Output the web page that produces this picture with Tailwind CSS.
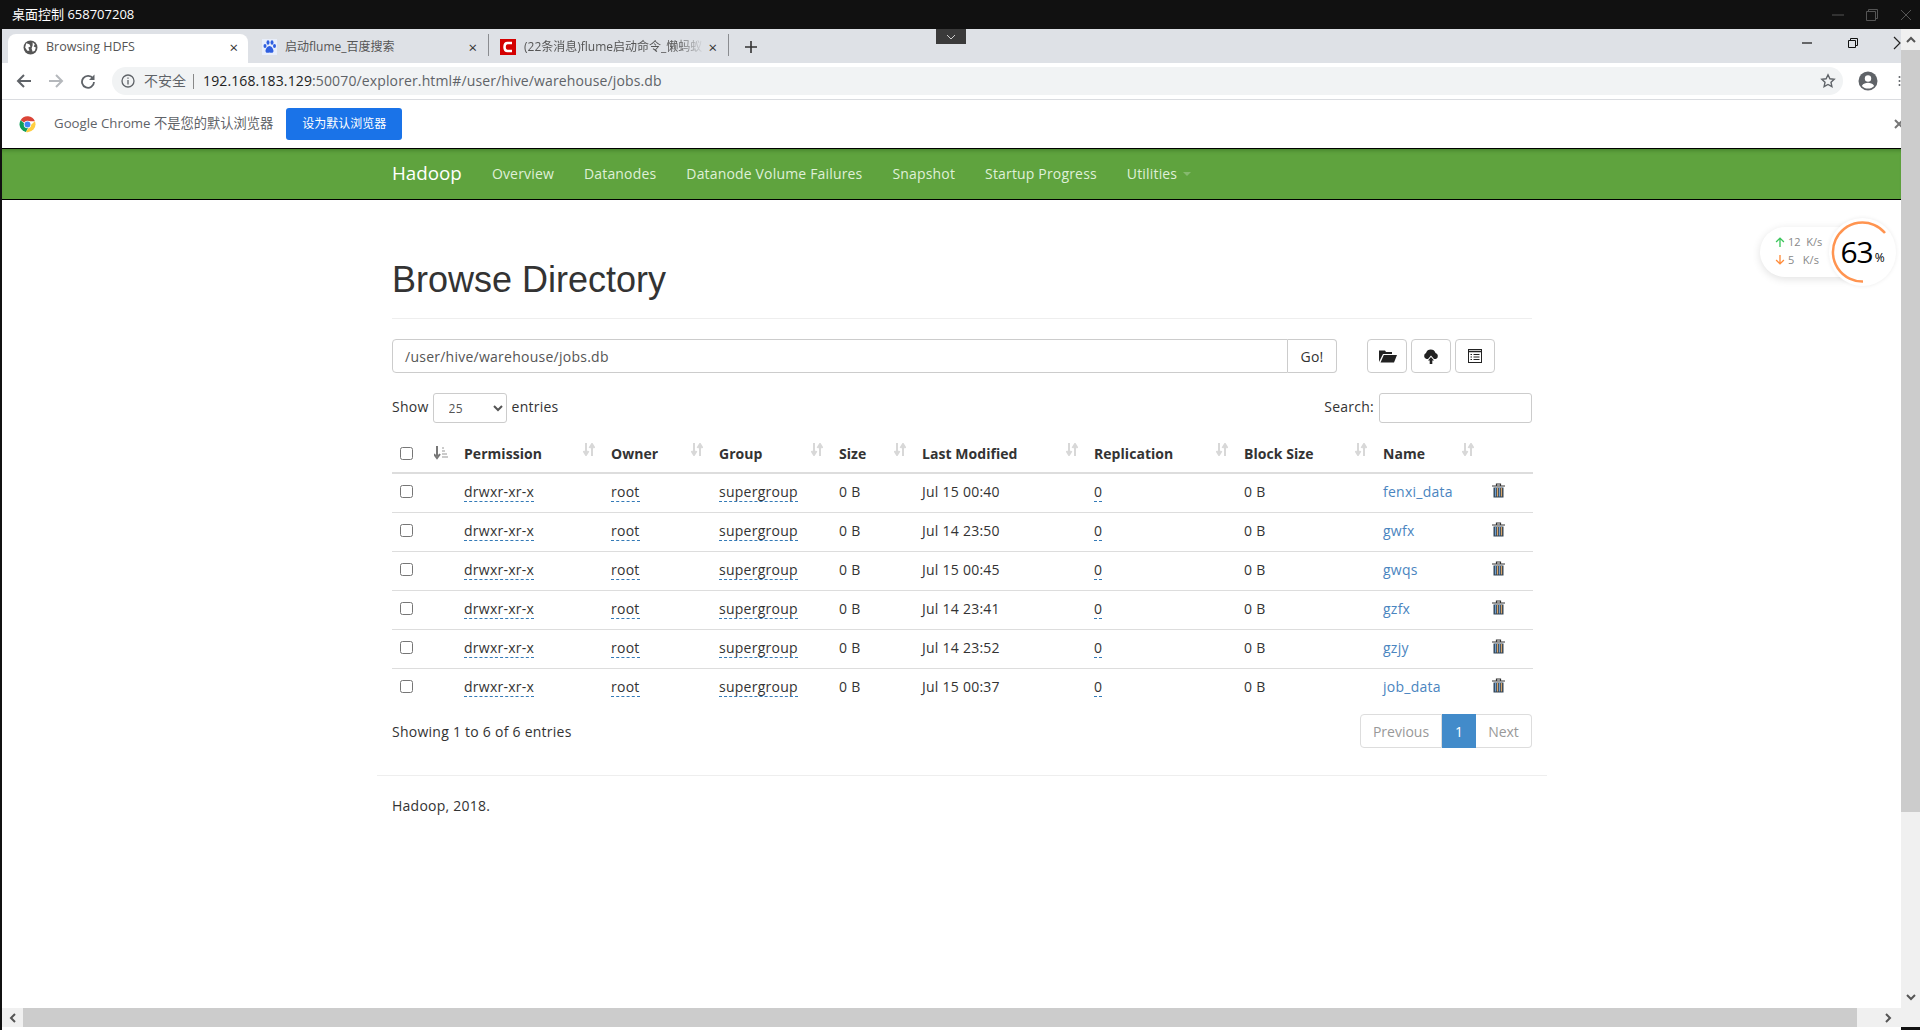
<!DOCTYPE html>
<html><head><meta charset="utf-8"><script src="https://cdn.jsdelivr.net/npm/@tailwindcss/browser@4"></script></head>
<body class="m-0 overflow-hidden">
<div class="w-[1920px] h-[1030px] bg-[#111111] flex flex-col overflow-hidden relative font-['Open_Sans','Noto_Sans_CJK_SC',sans-serif] text-[#333333]">
  <!-- remote title bar -->
  <div class="h-[29px] shrink-0 flex items-center justify-between pl-[12px] pr-[7px] text-white text-[13px]">
    <span>桌面控制 658707208</span>
    <div class="flex items-center gap-[20px]">
      <svg width="14" height="14" viewBox="0 0 14 14"><path d="M1 7h12" stroke="#555" fill="none"/></svg>
      <svg width="14" height="14" viewBox="0 0 14 14"><path d="M1.500 3.500h9v9h-9zM3.500 3.500v-2h9v9h-2" stroke="#555" fill="none"/></svg>
      <svg width="14" height="14" viewBox="0 0 14 14"><path d="M2 2l10 10M12 2L2 12" stroke="#555" fill="none"/></svg>
    </div>
  </div>
  <div class="flex-1 flex min-h-0 pl-[2px]">
    <div class="flex-1 min-w-0 flex flex-col bg-white overflow-hidden">
      <!-- tabs -->
      <div class="h-[34px] shrink-0 bg-[#dee1e6] flex items-end pl-[6px] relative">
        <div class="w-[240px] h-[29px] pb-[3px] bg-white rounded-t-[8px] flex items-center pl-[15px] pr-[10px] text-[12.500px] text-[#555]">
          <svg width="15" height="15" viewBox="0 0 14 14" class="mr-[8px]"><circle cx="7" cy="7" r="6.500" fill="#555"/><path d="M3 3l3 1 1 2-2 1 1 3-2 0-2-3zM9 2l2 2-1 2 2 1-1 3-2 1-1-3 1-3z" fill="#fff"/></svg>
          <span class="flex-1">Browsing HDFS</span><span class="text-[#333] text-[15px]">×</span>
        </div>
        <div class="w-[240px] h-[29px] pb-[3px] flex items-center pl-[14px] pr-[11px] text-[12px] text-[#555]">
          <svg width="15" height="16" viewBox="0 0 15 16" class="mr-[8px]"><rect width="15" height="16" fill="#e8eefb"/><ellipse cx="3" cy="7" rx="1.500" ry="2" fill="#2f5fe0"/><ellipse cx="6" cy="3.500" rx="1.500" ry="2.200" fill="#2f5fe0"/><ellipse cx="10" cy="3.500" rx="1.500" ry="2.200" fill="#2f5fe0"/><ellipse cx="12.500" cy="7" rx="1.500" ry="2" fill="#2f5fe0"/><path d="M7.500 7c-2 0-4 3-4 5s2 2 4 1.500c2 .5 4 .5 4-1.500s-2-5-4-5z" fill="#2f5fe0"/></svg>
          <span class="flex-1">启动flume_百度搜索</span><span class="text-[#333] text-[15px]">×</span>
        </div>
        <div class="w-px h-[22px] bg-[#8a8c90] mb-[7px]"></div>
        <div class="w-[239px] h-[29px] pb-[3px] flex items-center pl-[11px] pr-[11px] text-[12px] text-[#555]">
          <svg width="16" height="16" viewBox="0 0 16 16" class="mr-[8px] shrink-0"><rect width="16" height="16" fill="#d40000"/><path d="M12 4H7.500C5.500 4 4.500 6 4.500 8s1 4 3 4H12" stroke="#fff" stroke-width="2.500" fill="none"/></svg>
          <span class="flex-1 overflow-hidden whitespace-nowrap [mask-image:linear-gradient(to_right,black_85%,transparent)]">(22条消息)flume启动命令_懒蚂蚁</span><span class="text-[#333] text-[15px] ml-[4px]">×</span>
        </div>
        <div class="w-px h-[22px] bg-[#8a8c90] mb-[7px]"></div>
        <svg width="14" height="14" viewBox="0 0 14 14" class="ml-[15px] mb-[9px]"><path d="M7 1v12M1 7h12" stroke="#333" stroke-width="1.600"/></svg>
        <div class="flex-1"></div>
        <svg width="12" height="12" viewBox="0 0 12 12" class="mr-[34px] mb-[14px]"><path d="M1 6h10" stroke="#111" stroke-width="1.200"/></svg>
        <svg width="12" height="12" viewBox="0 0 12 12" class="mr-[34px] mb-[14px]"><path d="M1.500 3.500h7v7h-7zM3.500 3.500v-2h7v7h-2" stroke="#111" fill="none"/></svg>
        <svg width="8" height="14" viewBox="0 0 8 14" class="mb-[13px]"><path d="M1 1l6 6-6 6" stroke="#222" fill="none" stroke-width="1.200"/></svg>
      </div>
      <!-- toolbar -->
      <div class="h-[37px] shrink-0 flex items-center pl-[14px] border-b border-[#dadce0] bg-white">
        <svg width="16" height="16" viewBox="0 0 16 16"><path d="M15 8H2M8 2L2 8l6 6" stroke="#5f6368" stroke-width="2" fill="none"/></svg>
        <svg width="16" height="16" viewBox="0 0 16 16" class="ml-[16px]"><path d="M1 8h13M8 2l6 6-6 6" stroke="#b5b8bc" stroke-width="2" fill="none"/></svg>
        <svg width="16" height="16" viewBox="0 0 16 16" class="ml-[16px]"><path d="M13 5.500A6 6 0 1 0 14 9" stroke="#5f6368" stroke-width="1.800" fill="none"/><path d="M14.500 1.500v5.500h-5.500z" fill="#5f6368"/></svg>
        <div class="ml-[16px] w-[1731px] shrink-0 h-[28px] rounded-[14px] bg-[#f1f3f4] flex items-center pl-[9px] text-[14px] tracking-[0.13px] text-[#555]">
          <svg width="14" height="14" viewBox="0 0 14 14"><circle cx="7" cy="7" r="6" stroke="#5f6368" stroke-width="1.300" fill="none"/><path d="M7 6v4.500M7 3.500v1.300" stroke="#5f6368" stroke-width="1.300"/></svg>
          <span class="ml-[9px] mt-[-2px] text-[14px] tracking-normal text-[#5f6368]">不安全</span>
          <span class="w-px h-[15px] bg-[#888] ml-[7px] mr-[9px]"></span>
          <span class="mt-[-2px]"><span class="text-[#222]">192.168.183.129</span><span class="text-[#5f6368]">:50070/explorer.html#/user/hive/warehouse/jobs.db</span></span>
          <div class="flex-1"></div>
          <svg width="16" height="16" viewBox="0 0 16 16" class="mr-[7px]"><path d="M8 1.800l1.900 4 4.300.5-3.200 3 .9 4.300L8 11.500l-3.900 2.100.9-4.300-3.200-3 4.300-.5z" stroke="#5f6368" stroke-width="1.400" fill="none"/></svg>
        </div>
        <svg width="20" height="20" viewBox="0 0 20 20" class="ml-[15px] shrink-0"><circle cx="10" cy="10" r="9.500" fill="#5f6368"/><circle cx="10" cy="7.500" r="3.200" fill="#fff"/><path d="M3.800 15c1.500-2.600 4-3.200 6.200-3.200s4.700.6 6.200 3.200c-3 3.400-9.400 3.400-12.400 0z" fill="#fff"/></svg>
        <svg width="3" height="14" viewBox="0 0 3 14" class="ml-[20px] shrink-0"><circle cx="1.500" cy="3" r="1" fill="#5f6368"/><circle cx="1.500" cy="7" r="1" fill="#5f6368"/><circle cx="1.500" cy="11" r="1" fill="#5f6368"/></svg>
      </div>
      <!-- infobar -->
      <div class="h-[48px] shrink-0 flex items-center pl-[17px] bg-white text-[13.250px] text-[#5f6368]">
        <svg width="17" height="17" viewBox="0 0 32 32"><path d="M16 16L3 8A15 15 0 0 1 30 10H16z" fill="#db4437"/><path d="M3 8a15 15 0 0 0 10 22l5-9z" fill="#0f9d58"/><path d="M30 10a15 15 0 0 1-17 20l8-12z" fill="#ffcd40"/><circle cx="16" cy="16" r="7" fill="#fff"/><circle cx="16" cy="16" r="5.500" fill="#4285f4"/></svg>
        <span class="ml-[18px]">Google Chrome 不是您的默认浏览器</span>
        <div class="ml-[13px] w-[116px] h-[32px] rounded-[3px] bg-[#1a73e8] text-white text-[12px] flex items-center justify-center">设为默认浏览器</div>
        <div class="flex-1"></div>
        <svg width="10" height="10" viewBox="0 0 10 10" class="mr-[-3px]"><path d="M1 1l8 8M9 1L1 9" stroke="#777" stroke-width="2" fill="none"/></svg>
      </div>
      <!-- navbar -->
      <div class="h-[52px] shrink-0 bg-[#5fa33e] border-y border-black shadow-[inset_0_4px_4px_-3px_#3e7a28]">
        <div class="ml-[390px] h-full pb-[2px] flex items-center text-[14px] tracking-[0.17px] text-[#dff0d8]">
          <span class="text-[18.800px] tracking-normal text-white mr-[30px]">Hadoop</span>
          <span class="mr-[30px]">Overview</span>
          <span class="mr-[30px]">Datanodes</span>
          <span class="mr-[30px]">Datanode Volume Failures</span>
          <span class="mr-[30px]">Snapshot</span>
          <span class="mr-[30px]">Startup Progress</span>
          <span>Utilities</span>
          <span class="ml-[6px] mt-[2px] w-0 h-0 border-x-[4px] border-x-transparent border-t-[4px] border-t-[#86b96f]"></span>
        </div>
      </div>
      <!-- page -->
      <div class="flex-1 min-h-0 pl-[390px] w-[1530px] text-[14px] tracking-[0.25px]">
        <div class="w-[1140px]">
          <h1 class="mt-[60px] text-[36px] leading-[40px] tracking-normal font-['Liberation_Sans',sans-serif] font-normal pb-[18px] border-b border-[#eeeeee]">Browse Directory</h1>
          <div class="mt-[20px] flex h-[34px]">
            <div class="w-[896px] border border-[#cccccc] rounded-l-[4px] pl-[12px] flex items-center text-[#555]">/user/hive/warehouse/jobs.db</div>
            <div class="w-[49px] border border-l-0 border-[#cccccc] rounded-r-[4px] flex items-center justify-center">Go!</div>
            <div class="ml-[30px] w-[40px] border border-[#cccccc] rounded-[4px] flex items-center justify-center">
              <svg width="18" height="14" viewBox="0 0 18 14" class="ml-[2px]"><path d="M0 13V1.500h6l1 1.500h6v2H4zM4.800 6H18l-3 7.500H1.500z" fill="#222"/></svg>
            </div>
            <div class="ml-[4px] w-[40px] border border-[#cccccc] rounded-[4px] flex items-center justify-center">
              <svg width="16" height="15" viewBox="0 0 16 15"><path d="M3.500 10A3.200 3.200 0 0 1 3 4 5 5 0 0 1 12.500 4 3.200 3.200 0 0 1 13 10H11L8 6.500 5 10zM8 8l3 3.500H9.300V15H6.700v-3.500H5z" fill="#222"/></svg>
            </div>
            <div class="ml-[4px] w-[40px] border border-[#cccccc] rounded-[4px] flex items-center justify-center">
              <svg width="14" height="14" viewBox="0 0 14 14"><rect x="0.500" y="0.500" width="13" height="13" fill="none" stroke="#222"/><path d="M0 2.500h14" stroke="#222" stroke-width="1.500"/><path d="M2.500 5.500h1.500M5.500 5.500h6M2.500 8h1.500M5.500 8h6M2.500 10.500h1.500M5.500 10.500h6" stroke="#222"/></svg>
            </div>
          </div>
          <div class="mt-[20px] flex items-center justify-between h-[30px]">
            <div class="flex items-center">
              <span class="mt-[-3px]">Show</span>
              <select class="ml-[4px] w-[74px] h-[30px] border border-[#cccccc] rounded-[3px] pl-[11px] text-[12px] bg-white text-[#555]"><option>25</option></select>
              <span class="ml-[5px] mt-[-3px]">entries</span>
            </div>
            <div class="flex items-center">
              <span class="mt-[-3px]">Search:</span>
              <div class="ml-[5px] w-[153px] h-[30px] border border-[#cccccc] rounded-[3px]"></div>
            </div>
          </div>
          <table class="mt-[11px] w-[1141px] table-fixed border-collapse">
            <colgroup><col class="w-[42px]"><col class="w-[22px]"><col class="w-[147px]"><col class="w-[108px]"><col class="w-[120px]"><col class="w-[83px]"><col class="w-[172px]"><col class="w-[150px]"><col class="w-[139px]"><col class="w-[109px]"><col class="w-[49px]"></colgroup>
            <thead class="tracking-[0.05px]">
              <tr class="h-[39px] border-b-2 border-[#dddddd] font-bold text-left">
                <th class="pl-[8px]"><input type="checkbox" class="block w-[13px] h-[13px]"></th>
                <th class="pl-0"><svg width="15" height="14" viewBox="0 0 15 14"><path d="M3 0v10M0 8l3 4 3-4" stroke="#777" stroke-width="2" fill="none"/><path d="M8 2h2M8 5h3M8 8h5M8 11h6" stroke="#bbb" stroke-width="1.500"/></svg></th>
                <th class="pl-[8px]"><div class="w-[131px] flex justify-between"><span>Permission</span><svg width="12" height="13" viewBox="0 0 12 13"><path d="M3 0v10M0.500 8l2.500 4 2.500-4M9 13V3M6.500 5L9 1l2.500 4" stroke="#d8d8d8" stroke-width="2" fill="none"/></svg></div></th>
                <th class="pl-[8px]"><div class="w-[92px] flex justify-between"><span>Owner</span><svg width="12" height="13" viewBox="0 0 12 13"><path d="M3 0v10M0.500 8l2.500 4 2.500-4M9 13V3M6.500 5L9 1l2.500 4" stroke="#d8d8d8" stroke-width="2" fill="none"/></svg></div></th>
                <th class="pl-[8px]"><div class="w-[104px] flex justify-between"><span>Group</span><svg width="12" height="13" viewBox="0 0 12 13"><path d="M3 0v10M0.500 8l2.500 4 2.500-4M9 13V3M6.500 5L9 1l2.500 4" stroke="#d8d8d8" stroke-width="2" fill="none"/></svg></div></th>
                <th class="pl-[8px]"><div class="w-[67px] flex justify-between"><span>Size</span><svg width="12" height="13" viewBox="0 0 12 13"><path d="M3 0v10M0.500 8l2.500 4 2.500-4M9 13V3M6.500 5L9 1l2.500 4" stroke="#d8d8d8" stroke-width="2" fill="none"/></svg></div></th>
                <th class="pl-[8px]"><div class="w-[156px] flex justify-between"><span>Last Modified</span><svg width="12" height="13" viewBox="0 0 12 13"><path d="M3 0v10M0.500 8l2.500 4 2.500-4M9 13V3M6.500 5L9 1l2.500 4" stroke="#d8d8d8" stroke-width="2" fill="none"/></svg></div></th>
                <th class="pl-[8px]"><div class="w-[134px] flex justify-between"><span>Replication</span><svg width="12" height="13" viewBox="0 0 12 13"><path d="M3 0v10M0.500 8l2.500 4 2.500-4M9 13V3M6.500 5L9 1l2.500 4" stroke="#d8d8d8" stroke-width="2" fill="none"/></svg></div></th>
                <th class="pl-[8px]"><div class="w-[123px] flex justify-between"><span>Block Size</span><svg width="12" height="13" viewBox="0 0 12 13"><path d="M3 0v10M0.500 8l2.500 4 2.500-4M9 13V3M6.500 5L9 1l2.500 4" stroke="#d8d8d8" stroke-width="2" fill="none"/></svg></div></th>
                <th class="pl-[8px]"><div class="w-[91px] flex justify-between"><span>Name</span><svg width="12" height="13" viewBox="0 0 12 13"><path d="M3 0v10M0.500 8l2.500 4 2.500-4M9 13V3M6.500 5L9 1l2.500 4" stroke="#d8d8d8" stroke-width="2" fill="none"/></svg></div></th>
                <th></th>
              </tr>
            </thead>
            <tbody class="[&_td]:pb-[2px]">
              <tr class="h-[39px] border-b border-[#dddddd]"><td class="pl-[8px]"><input type="checkbox" class="block w-[13px] h-[13px]"></td><td></td><td class="pl-[8px]"><span class="border-b border-dashed border-[#337ab7]">drwxr-xr-x</span></td><td class="pl-[8px]"><span class="border-b border-dashed border-[#337ab7]">root</span></td><td class="pl-[8px]"><span class="border-b border-dashed border-[#337ab7]">supergroup</span></td><td class="pl-[8px]">0 B</td><td class="pl-[8px]">Jul 15 00:40</td><td class="pl-[8px]"><span class="border-b border-dashed border-[#337ab7]">0</span></td><td class="pl-[8px]">0 B</td><td class="pl-[8px] text-[#4a85c0]">fenxi_data</td><td class="pl-[8px]"><svg width="13" height="15" viewBox="0 0 13 15" class="-translate-y-[1px]"><path d="M0 3h13M4.500 3V1h4v2" stroke="#333" fill="none" stroke-width="1.200"/><rect x="1.500" y="4.500" width="10" height="10" fill="#334455"/><path d="M3.500 5v8.500M7.500 5v8.500" stroke="#6f9fd0" stroke-width="1.200"/><path d="M5.500 5v8.500M9.500 5v8.500" stroke="#d8a468" stroke-width="1.200"/></svg></td></tr>
              <tr class="h-[39px] border-b border-[#dddddd]"><td class="pl-[8px]"><input type="checkbox" class="block w-[13px] h-[13px]"></td><td></td><td class="pl-[8px]"><span class="border-b border-dashed border-[#337ab7]">drwxr-xr-x</span></td><td class="pl-[8px]"><span class="border-b border-dashed border-[#337ab7]">root</span></td><td class="pl-[8px]"><span class="border-b border-dashed border-[#337ab7]">supergroup</span></td><td class="pl-[8px]">0 B</td><td class="pl-[8px]">Jul 14 23:50</td><td class="pl-[8px]"><span class="border-b border-dashed border-[#337ab7]">0</span></td><td class="pl-[8px]">0 B</td><td class="pl-[8px] text-[#4a85c0]">gwfx</td><td class="pl-[8px]"><svg width="13" height="15" viewBox="0 0 13 15" class="-translate-y-[1px]"><path d="M0 3h13M4.500 3V1h4v2" stroke="#333" fill="none" stroke-width="1.200"/><rect x="1.500" y="4.500" width="10" height="10" fill="#334455"/><path d="M3.500 5v8.500M7.500 5v8.500" stroke="#6f9fd0" stroke-width="1.200"/><path d="M5.500 5v8.500M9.500 5v8.500" stroke="#d8a468" stroke-width="1.200"/></svg></td></tr>
              <tr class="h-[39px] border-b border-[#dddddd]"><td class="pl-[8px]"><input type="checkbox" class="block w-[13px] h-[13px]"></td><td></td><td class="pl-[8px]"><span class="border-b border-dashed border-[#337ab7]">drwxr-xr-x</span></td><td class="pl-[8px]"><span class="border-b border-dashed border-[#337ab7]">root</span></td><td class="pl-[8px]"><span class="border-b border-dashed border-[#337ab7]">supergroup</span></td><td class="pl-[8px]">0 B</td><td class="pl-[8px]">Jul 15 00:45</td><td class="pl-[8px]"><span class="border-b border-dashed border-[#337ab7]">0</span></td><td class="pl-[8px]">0 B</td><td class="pl-[8px] text-[#4a85c0]">gwqs</td><td class="pl-[8px]"><svg width="13" height="15" viewBox="0 0 13 15" class="-translate-y-[1px]"><path d="M0 3h13M4.500 3V1h4v2" stroke="#333" fill="none" stroke-width="1.200"/><rect x="1.500" y="4.500" width="10" height="10" fill="#334455"/><path d="M3.500 5v8.500M7.500 5v8.500" stroke="#6f9fd0" stroke-width="1.200"/><path d="M5.500 5v8.500M9.500 5v8.500" stroke="#d8a468" stroke-width="1.200"/></svg></td></tr>
              <tr class="h-[39px] border-b border-[#dddddd]"><td class="pl-[8px]"><input type="checkbox" class="block w-[13px] h-[13px]"></td><td></td><td class="pl-[8px]"><span class="border-b border-dashed border-[#337ab7]">drwxr-xr-x</span></td><td class="pl-[8px]"><span class="border-b border-dashed border-[#337ab7]">root</span></td><td class="pl-[8px]"><span class="border-b border-dashed border-[#337ab7]">supergroup</span></td><td class="pl-[8px]">0 B</td><td class="pl-[8px]">Jul 14 23:41</td><td class="pl-[8px]"><span class="border-b border-dashed border-[#337ab7]">0</span></td><td class="pl-[8px]">0 B</td><td class="pl-[8px] text-[#4a85c0]">gzfx</td><td class="pl-[8px]"><svg width="13" height="15" viewBox="0 0 13 15" class="-translate-y-[1px]"><path d="M0 3h13M4.500 3V1h4v2" stroke="#333" fill="none" stroke-width="1.200"/><rect x="1.500" y="4.500" width="10" height="10" fill="#334455"/><path d="M3.500 5v8.500M7.500 5v8.500" stroke="#6f9fd0" stroke-width="1.200"/><path d="M5.500 5v8.500M9.500 5v8.500" stroke="#d8a468" stroke-width="1.200"/></svg></td></tr>
              <tr class="h-[39px] border-b border-[#dddddd]"><td class="pl-[8px]"><input type="checkbox" class="block w-[13px] h-[13px]"></td><td></td><td class="pl-[8px]"><span class="border-b border-dashed border-[#337ab7]">drwxr-xr-x</span></td><td class="pl-[8px]"><span class="border-b border-dashed border-[#337ab7]">root</span></td><td class="pl-[8px]"><span class="border-b border-dashed border-[#337ab7]">supergroup</span></td><td class="pl-[8px]">0 B</td><td class="pl-[8px]">Jul 14 23:52</td><td class="pl-[8px]"><span class="border-b border-dashed border-[#337ab7]">0</span></td><td class="pl-[8px]">0 B</td><td class="pl-[8px] text-[#4a85c0]">gzjy</td><td class="pl-[8px]"><svg width="13" height="15" viewBox="0 0 13 15" class="-translate-y-[1px]"><path d="M0 3h13M4.500 3V1h4v2" stroke="#333" fill="none" stroke-width="1.200"/><rect x="1.500" y="4.500" width="10" height="10" fill="#334455"/><path d="M3.500 5v8.500M7.500 5v8.500" stroke="#6f9fd0" stroke-width="1.200"/><path d="M5.500 5v8.500M9.500 5v8.500" stroke="#d8a468" stroke-width="1.200"/></svg></td></tr>
              <tr class="h-[39px]"><td class="pl-[8px]"><input type="checkbox" class="block w-[13px] h-[13px]"></td><td></td><td class="pl-[8px]"><span class="border-b border-dashed border-[#337ab7]">drwxr-xr-x</span></td><td class="pl-[8px]"><span class="border-b border-dashed border-[#337ab7]">root</span></td><td class="pl-[8px]"><span class="border-b border-dashed border-[#337ab7]">supergroup</span></td><td class="pl-[8px]">0 B</td><td class="pl-[8px]">Jul 15 00:37</td><td class="pl-[8px]"><span class="border-b border-dashed border-[#337ab7]">0</span></td><td class="pl-[8px]">0 B</td><td class="pl-[8px] text-[#4a85c0]">job_data</td><td class="pl-[8px]"><svg width="13" height="15" viewBox="0 0 13 15" class="-translate-y-[1px]"><path d="M0 3h13M4.500 3V1h4v2" stroke="#333" fill="none" stroke-width="1.200"/><rect x="1.500" y="4.500" width="10" height="10" fill="#334455"/><path d="M3.500 5v8.500M7.500 5v8.500" stroke="#6f9fd0" stroke-width="1.200"/><path d="M5.500 5v8.500M9.500 5v8.500" stroke="#d8a468" stroke-width="1.200"/></svg></td></tr>
            </tbody>
          </table>
          <div class="mt-[7px] flex justify-between items-start">
            <span class="mt-[7px]">Showing 1 to 6 of 6 entries</span>
            <div class="flex h-[34px] tracking-normal">
              <div class="w-[82px] border border-[#dddddd] rounded-l-[4px] text-[#999] flex items-center justify-center">Previous</div>
              <div class="w-[34px] bg-[#428bca] text-white flex items-center justify-center">1</div>
              <div class="w-[56px] border border-l-0 border-[#dddddd] rounded-r-[4px] text-[#999] flex items-center justify-center">Next</div>
            </div>
          </div>
        </div>
        <div class="-ml-[15px] w-[1170px] mt-[27px] border-t border-[#eeeeee]"></div>
        <div class="mt-[19px]">Hadoop, 2018.</div>
      </div>
    </div>
    <!-- vertical scrollbar -->
    <div class="w-[19px] shrink-0 bg-[#f0f0f0] flex flex-col items-center mb-[22px]">
      <div class="h-[21px] w-full bg-[#f0f0f0] flex items-center justify-center"><svg width="10" height="7" viewBox="0 0 10 7"><path d="M1 6l4-4 4 4" stroke="#555" stroke-width="2" fill="none"/></svg></div>
      <div class="h-[762px] w-full bg-[#cccccc]"></div>
      <div class="flex-1"></div>
      <div class="h-[21px] flex items-center justify-center"><svg width="10" height="7" viewBox="0 0 10 7"><path d="M1 1l4 4 4-4" stroke="#555" stroke-width="2" fill="none"/></svg></div>
    </div>
  </div>
  <!-- horizontal scrollbar placed over bottom of the frame -->
  <div class="absolute left-[2px] right-0 bottom-[3px] h-[19px] bg-[#f0f0f0] flex items-center">
    <div class="w-[21px] flex items-center justify-center"><svg width="7" height="10" viewBox="0 0 7 10"><path d="M6 1L2 5l4 4" stroke="#555" stroke-width="2" fill="none"/></svg></div>
    <div class="w-[1834px] h-full bg-[#cccccc]"></div>
    <div class="flex-1 flex items-center justify-center"><svg width="7" height="10" viewBox="0 0 7 10"><path d="M1 1l4 4-4 4" stroke="#555" stroke-width="2" fill="none"/></svg></div>
  </div>
  <!-- network speed widget floats over page -->
  <div class="absolute left-[1760px] top-[227px] w-[90px] h-[50px] bg-white rounded-l-[25px] shadow-[0_2px_8px_rgba(0,0,0,0.12)] text-[11px] text-[#888]">
    <div class="absolute left-[15px] top-[7px] flex items-center gap-[3px]"><svg width="10" height="10" viewBox="0 0 9 9"><path d="M4.500 9V1M1 4.500l3.500-3.500L8 4.500" stroke="#3cc65c" stroke-width="1.200" fill="none"/></svg><span>12&nbsp; K/s</span></div>
    <div class="absolute left-[15px] top-[25px] flex items-center gap-[3px]"><svg width="10" height="10" viewBox="0 0 9 9"><path d="M4.500 0v8M1 4.500L4.500 8 8 4.500" stroke="#ff8c3a" stroke-width="1.200" fill="none"/></svg><span>5&nbsp;&nbsp; K/s</span></div>
  </div>
  <div class="absolute left-[1829px] top-[218px] w-[67px] h-[68px] bg-white rounded-full shadow-[0_0_4px_rgba(0,0,0,0.08)] flex items-center justify-center text-black">
    <svg width="62" height="62" viewBox="0 0 62 62" class="absolute left-[2px] top-[3px]"><path d="M54 12A29.500 29.500 0 1 0 32 60.500" stroke="#ff9450" stroke-width="2.500" fill="none"/></svg>
    <span class="text-[30px] leading-none tracking-[-1px]">63</span><span class="text-[12px] mt-[12px] ml-[2px]">%</span>
  </div>
  <!-- remote control notch -->
  <div class="absolute left-[936px] top-[29px] w-[30px] h-[15px] bg-[#3a3a3a] flex items-center justify-center"><svg width="10" height="6" viewBox="0 0 10 6"><path d="M1 1l4 4 4-4" stroke="#ccc" fill="none"/></svg></div>
</div>
</body></html>
